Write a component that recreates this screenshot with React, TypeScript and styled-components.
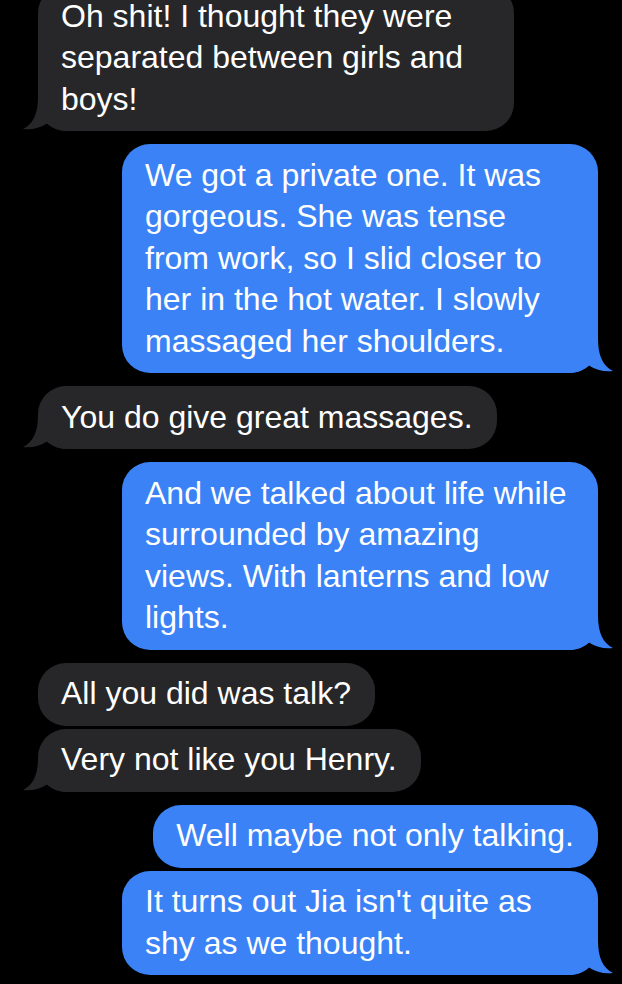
import React from 'react';
import styled, { createGlobalStyle } from 'styled-components';

type Sender = 'me' | 'them';

interface Message {
  id: number;
  from: Sender;
  text: string;
}

const GRAY = '#27272a';
const BLUE = '#3b82f6';

const messages: Message[] = [
  { id: 1, from: 'them', text: 'Oh shit! I thought they were separated between girls and boys!' },
  {
    id: 2,
    from: 'me',
    text: 'We got a private one. It was gorgeous. She was tense from work, so I slid closer to her in the hot water. I slowly massaged her shoulders.',
  },
  { id: 3, from: 'them', text: 'You do give great massages.' },
  {
    id: 4,
    from: 'me',
    text: 'And we talked about life while surrounded by amazing views. With lanterns and low lights.',
  },
  { id: 5, from: 'them', text: 'All you did was talk?' },
  { id: 6, from: 'them', text: 'Very not like you Henry.' },
  { id: 7, from: 'me', text: 'Well maybe not only talking.' },
  { id: 8, from: 'me', text: "It turns out Jia isn't quite as shy as we thought." },
];

const GlobalStyle = createGlobalStyle`
  html, body {
    margin: 0;
    padding: 0;
    height: 100%;
    background: #000000;
    overflow: hidden;
  }
  body {
    font-family: "Liberation Sans", Arial, Helvetica, sans-serif;
  }
`;

const Screen = styled.div`
  width: 622px;
  height: 984px;
  background: #000000;
  overflow: hidden;
`;

const Thread = styled.div`
  display: flex;
  flex-direction: column;
  margin-top: -15px;
  padding: 0 24px 0 38px;
`;

const Row = styled.div<{ $from: Sender; $grouped: boolean }>`
  display: flex;
  justify-content: ${({ $from }) => ($from === 'me' ? 'flex-end' : 'flex-start')};
  margin-top: ${({ $grouped }) => ($grouped ? '3px' : '13px')};

  &:first-child {
    margin-top: 0;
  }
`;

const Bubble = styled.div<{ $from: Sender }>`
  position: relative;
  max-width: 476px;
  box-sizing: border-box;
  padding: 10.75px 24px 10.75px 23px;
  border-radius: 28px;
  background: ${({ $from }) => ($from === 'me' ? BLUE : GRAY)};
  color: #ffffff;
  font-size: 32px;
  line-height: 41.5px;
`;

const Text = styled.span`
  position: relative;
  z-index: 1;
`;

const TailSvg = styled.svg<{ $from: Sender }>`
  position: absolute;
  bottom: 0;
  z-index: 0;
  width: 50px;
  height: 34px;
  ${({ $from }) =>
    $from === 'me'
      ? 'right: -15px; transform: scaleX(-1);'
      : 'left: -15px;'}
`;

const Tail: React.FC<{ from: Sender }> = ({ from }) => (
  <TailSvg $from={from} viewBox="0 0 50 34" aria-hidden>
    <path
      d="M15 0 C15 17 10 27 0 32 C9 33 17 31 24 26.5 C30 31.5 36 34 45 34 L50 34 L50 0 Z"
      fill={from === 'me' ? BLUE : GRAY}
    />
  </TailSvg>
);

const App: React.FC = () => {
  return (
    <>
      <GlobalStyle />
      <Screen>
        <Thread>
          {messages.map((msg, i) => {
            const prev = messages[i - 1];
            const next = messages[i + 1];
            const grouped = !!prev && prev.from === msg.from;
            const showTail = !next || next.from !== msg.from;
            return (
              <Row key={msg.id} $from={msg.from} $grouped={grouped}>
                <Bubble $from={msg.from}>
                  {showTail && <Tail from={msg.from} />}
                  <Text>{msg.text}</Text>
                </Bubble>
              </Row>
            );
          })}
        </Thread>
      </Screen>
    </>
  );
};

export default App;
